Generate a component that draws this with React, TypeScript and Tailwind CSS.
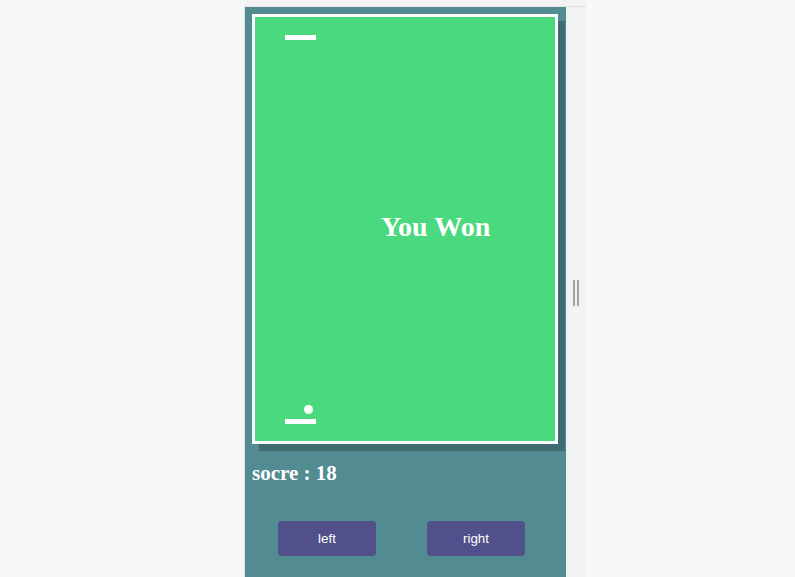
import React from "react";

export default function App() {
  return (
    <div className="w-[795px] h-[577px] bg-[#f7f9f8] overflow-hidden">
      <div className="ml-[244px] w-[342px] h-[577px] flex flex-col">
        <div className="h-[6px] bg-[#f3f3f3]" />
        <div className="flex flex-1 border-t border-l border-[#e3dfe3]">
          <div className="w-[321px] bg-[#528b91] flex flex-col overflow-hidden">
            <div className="pt-[7px] pl-[7px]">
              <div className="relative w-[306px] h-[430px] border-[3px] border-white bg-[#4ad97f] shadow-[7px_7px_0_#3f6b70]">
                <div className="absolute left-[30px] top-[18px] w-[31px] h-[5px] bg-white" />
                <div className="absolute left-[30px] top-[402px] w-[31px] h-[5px] bg-white" />
                <div className="absolute left-[49px] top-[388px] w-[9px] h-[9px] rounded-full bg-white" />
                <div
                  className="absolute left-[126px] top-[194px] text-white font-bold text-[28px] leading-[31px] whitespace-nowrap"
                  style={{ fontFamily: '"Liberation Serif", "Times New Roman", serif' }}
                >
                  You Won
                </div>
              </div>
            </div>
            <div
              className="mt-[18px] pl-[7px] text-white font-bold text-[21px] leading-[23px]"
              style={{ fontFamily: '"Liberation Serif", "Times New Roman", serif' }}
            >
              socre : 18
            </div>
            <div className="mt-[36px] flex pl-[33px] gap-[51px]">
              <button
                className="w-[98px] h-[35px] rounded-[4px] bg-[#52508a] text-white text-[13.333px]"
                style={{ fontFamily: '"Liberation Sans", Arial, sans-serif' }}
              >
                left
              </button>
              <button
                className="w-[98px] h-[35px] rounded-[4px] bg-[#52508a] text-white text-[13.333px]"
                style={{ fontFamily: '"Liberation Sans", Arial, sans-serif' }}
              >
                right
              </button>
            </div>
          </div>
          <div className="w-[20px] bg-[#f1f2f4] flex justify-center pt-[273px]">
            <div className="flex gap-[2px] h-[26px]">
              <div className="w-[2px] h-full bg-[#a3a3a3]" />
              <div className="w-[2px] h-full bg-[#a3a3a3]" />
            </div>
          </div>
        </div>
      </div>
    </div>
  );
}
